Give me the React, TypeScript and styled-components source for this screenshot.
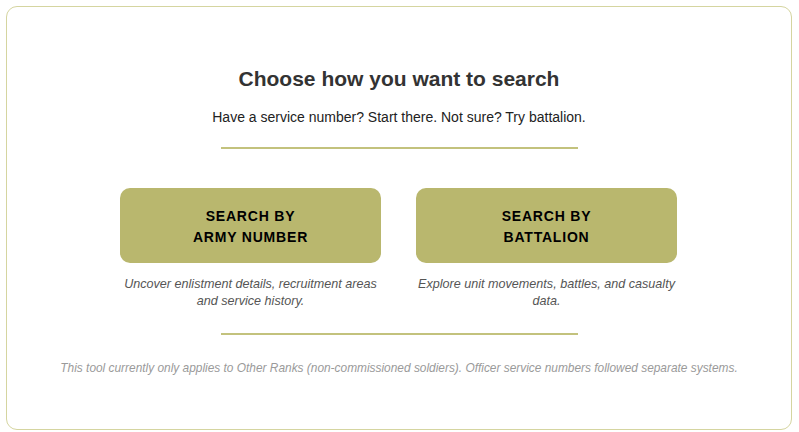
import React from "react";
import styled, { createGlobalStyle } from "styled-components";

const GlobalStyle = createGlobalStyle`
  html, body { margin: 0; padding: 0; background: #ffffff; }
  body { font-family: "Liberation Sans", Arial, sans-serif; }
  * { box-sizing: border-box; }
`;

const Page = styled.div`
  padding: 6px 7px 2px 6px;
`;

const Card = styled.section`
  height: 424px;
  border: 1.5px solid #d5d5a0;
  border-radius: 11px;
  display: flex;
  flex-direction: column;
  align-items: center;
  padding-top: 60px;
  background: #ffffff;
`;

const Title = styled.h1`
  margin: 0;
  font-size: 21px;
  line-height: 24px;
  font-weight: 700;
  color: #333333;
`;

const Subtitle = styled.p`
  margin: 17px 0 0;
  font-size: 14px;
  line-height: 18px;
  color: #222222;
`;

const Divider = styled.hr<{ $top: number }>`
  margin: ${(p) => p.$top}px 0 0;
  width: 357px;
  height: 2px;
  border: none;
  background: #c3c27d;
`;

const Options = styled.div`
  margin-top: 39px;
  margin-right: 1px;
  display: flex;
  gap: 35px;
`;

const Option = styled.div`
  width: 261px;
  display: flex;
  flex-direction: column;
  align-items: center;
`;

const SearchButton = styled.button`
  width: 100%;
  height: 75px;
  padding: 2px 0 0;
  border: none;
  border-radius: 10px;
  background: #b9b76e;
  color: #000000;
  font-family: "Liberation Sans", Arial, sans-serif;
  font-size: 14px;
  font-weight: 700;
  line-height: 21px;
  letter-spacing: 0.8px;
  text-transform: uppercase;
  cursor: pointer;
`;

const Description = styled.p`
  margin: 13px 0 0;
  font-size: 12.6px;
  line-height: 17px;
  font-style: italic;
  color: #555555;
  text-align: center;
`;

const Note = styled.p`
  margin: 26px 0 0;
  font-size: 11.9px;
  line-height: 14px;
  font-style: italic;
  color: #9a9a9a;
  text-align: center;
`;

const options = [
  {
    label: ["Search by", "Army Number"],
    text: "Uncover enlistment details, recruitment areas and service history.",
  },
  {
    label: ["Search by", "Battalion"],
    text: "Explore unit movements, battles, and casualty data.",
  },
];

export default function App() {
  return (
    <>
      <GlobalStyle />
      <Page>
        <Card>
          <Title>Choose how you want to search</Title>
          <Subtitle>Have a service number? Start there. Not sure? Try battalion.</Subtitle>
          <Divider $top={21} />
          <Options>
            {options.map((o) => (
              <Option key={o.label[1]}>
                <SearchButton>
                  {o.label[0]}
                  <br />
                  {o.label[1]}
                </SearchButton>
                <Description>{o.text}</Description>
              </Option>
            ))}
          </Options>
          <Divider $top={23} />
          <Note>
            This tool currently only applies to Other Ranks (non-commissioned soldiers). Officer service numbers followed separate systems.
          </Note>
        </Card>
      </Page>
    </>
  );
}
